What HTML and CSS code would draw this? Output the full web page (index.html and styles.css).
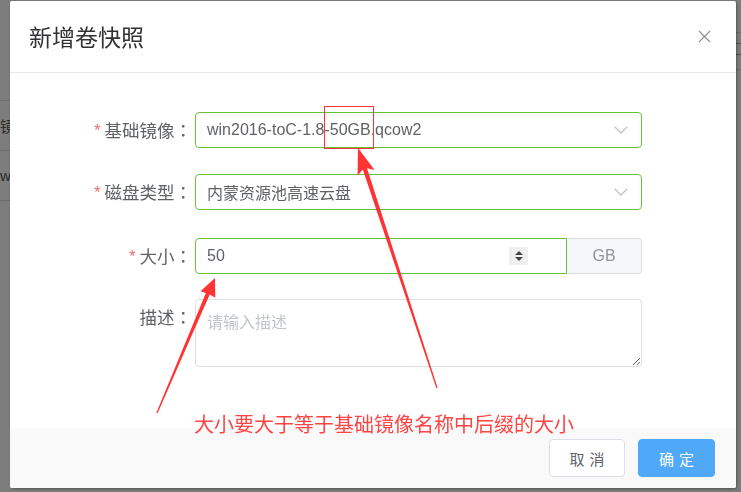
FILE: index.html
```html
<!DOCTYPE html>
<html lang="zh-CN">
<head>
<meta charset="utf-8">
<title>新增卷快照</title>
<link rel="stylesheet" href="styles.css">
</head>
<body>
<div class="page">
  <div class="bg-main">
    <div class="bg-top"></div>
    <div class="bg-row">镜像名称</div>
    <div class="bg-row">win2016-toC-1.8-50GB.qcow2</div>
  </div>
  <div class="bg-side">
    <div class="bg-side-top"></div>
    <div class="bg-side-icon"></div>
    <div class="bg-side-row"></div>
  </div>
</div>

<div class="mask"></div>

<div class="dialog">
  <div class="dlg-header">
    <span class="dlg-title">新增卷快照</span>
    <svg class="dlg-close" width="13" height="13" viewBox="0 0 13 13"><path d="M1 1 L12 12 M12 1 L1 12" stroke="#909399" stroke-width="1.2" fill="none"/></svg>
  </div>
  <div class="dlg-body">
    <div class="form-row gap-a">
      <div class="form-label"><span class="req">*</span>基础镜像<span class="colon">：</span></div>
      <div class="select">
        <span>win2016-toC-1.8-50GB.qcow2</span>
        <svg width="14" height="8" viewBox="0 0 14 8"><path d="M0.7 0.7 L7 7 L13.3 0.7" stroke="#c0c4cc" stroke-width="1.3" fill="none"/></svg>
      </div>
    </div>
    <div class="form-row gap-b">
      <div class="form-label"><span class="req">*</span>磁盘类型<span class="colon">：</span></div>
      <div class="select">
        <span class="cjk">内蒙资源池高速云盘</span>
        <svg width="14" height="8" viewBox="0 0 14 8"><path d="M0.7 0.7 L7 7 L13.3 0.7" stroke="#c0c4cc" stroke-width="1.3" fill="none"/></svg>
      </div>
    </div>
    <div class="form-row gap-c">
      <div class="form-label"><span class="req">*</span>大小<span class="colon">：</span></div>
      <div class="num-group">
        <div class="num-input">
          <span>50</span>
          <span class="spin"><span class="tri-up"></span><span class="tri-down"></span></span>
        </div>
        <div class="append">GB</div>
      </div>
    </div>
    <div class="form-row">
      <div class="form-label">描述<span class="colon">：</span></div>
      <textarea class="desc" placeholder="请输入描述"></textarea>
    </div>
  </div>
  <div class="dlg-footer">
    <button class="btn btn-default">取消</button>
    <button class="btn btn-primary">确定</button>
  </div>
</div>

<div class="annot">
  <div class="annot-box"></div>
  <svg class="annot-svg" width="741" height="492" viewBox="0 0 741 492">
    <polygon fill="#f33" points="358,148 374.6,169.9 367,168.2 437.6,387.8 436.4,388.2 362.8,169.6 357.6,175.5"/>
    <polygon fill="#f33" points="215,278 215.3,297.7 209.7,294.6 157.6,413.2 156.4,412.8 205.9,293 200.5,291.3"/>
  </svg>
  <div class="annot-text">大小要大于等于基础镜像名称中后缀的大小</div>
</div>
</body>
</html>
```

FILE: styles.css
```css
* { box-sizing: border-box; }
html, body { margin: 0; padding: 0; }
body {
  width: 741px;
  height: 492px;
  overflow: hidden;
  background: #fff;
  font-family: "Liberation Sans", "Noto Sans CJK SC", sans-serif;
}

/* background page */
.page { display: flex; height: 492px; }
.bg-main { flex: 1; }
.bg-top { height: 101px; border-bottom: 1px solid #dcdcdc; }
.bg-row {
  height: 50px;
  border-bottom: 1px solid #dcdcdc;
  display: flex;
  align-items: center;
  font-size: 15px;
  color: #555;
}
.bg-side { width: 10px; }
.bg-side-top { height: 33px; border-bottom: 1px solid #dcdcdc; }
.bg-side-icon { height: 12px; margin: 10px 0 0 3px; width: 10px; border: 1px solid #999; }
.bg-side-row { height: 15px; border-bottom: 1px solid #dcdcdc; }

.mask { position: fixed; inset: 0; background: rgba(0, 0, 0, 0.51); }

/* dialog */
.dialog {
  position: fixed;
  left: 10px;
  top: 1px;
  width: 726px;
  height: 487px;
  background: #fff;
  border-radius: 2px;
  box-shadow: 1px 1px 3px rgba(0, 0, 0, 0.35);
  display: flex;
  flex-direction: column;
  overflow: hidden;
}
.dlg-header {
  flex: none;
  height: 72px;
  border-bottom: 1px solid #e8e8e8;
  display: flex;
  align-items: center;
  justify-content: space-between;
  padding: 0 25px 0 19px;
}
.dlg-title {
  font-family: "Noto Sans CJK SC", sans-serif;
  font-size: 23px;
  color: #303133;
  line-height: 1;
}
.dlg-body { flex: 1; padding-top: 39px; }

.form-row {
  display: grid;
  grid-template-columns: 185px 447px;
  align-items: start;
}
.gap-a { margin-bottom: 26px; }
.gap-b { margin-bottom: 28px; }
.gap-c { margin-bottom: 25px; }

.form-label {
  height: 36px;
  display: flex;
  align-items: center;
  justify-content: flex-end;
  font-family: "Noto Sans CJK SC", sans-serif;
  font-size: 17.5px;
  line-height: 1;
  color: #606266;
  padding-right: 3px;
}
.colon { font-family: "Noto Sans CJK JP", sans-serif; }
.req {
  font-family: "Liberation Sans", sans-serif;
  color: #f56c6c;
  font-size: 17px;
  margin-right: 4px;
}

.select {
  height: 36px;
  border: 1px solid #67c23a;
  border-radius: 4px;
  display: flex;
  align-items: center;
  justify-content: space-between;
  padding: 0 13px 0 11px;
  font-size: 16px;
  color: #606266;
}
.cjk { font-family: "Noto Sans CJK SC", sans-serif; }

.num-group { display: flex; height: 36px; }
.num-input {
  width: 372px;
  border: 1px solid #67c23a;
  border-radius: 4px 0 0 4px;
  display: flex;
  align-items: center;
  justify-content: space-between;
  padding: 0 38px 0 11px;
  font-size: 16px;
  color: #606266;
}
.spin {
  width: 19px;
  height: 18px;
  background: #efefef;
  display: flex;
  flex-direction: column;
  align-items: center;
  justify-content: center;
  gap: 2px;
}
.tri-up {
  width: 0; height: 0;
  border-left: 4.5px solid transparent;
  border-right: 4.5px solid transparent;
  border-bottom: 4.5px solid #444;
}
.tri-down {
  width: 0; height: 0;
  border-left: 4.5px solid transparent;
  border-right: 4.5px solid transparent;
  border-top: 4.5px solid #444;
}
.append {
  flex: 1;
  background: #f5f7fa;
  border: 1px solid #dcdfe6;
  border-left: none;
  border-radius: 0 4px 4px 0;
  color: #909399;
  font-size: 16px;
  display: flex;
  align-items: center;
  justify-content: center;
}

.desc {
  display: block;
  width: 447px;
  height: 68px;
  border: 1px solid #dcdfe6;
  border-radius: 4px;
  padding: 9px 11px;
  font-family: "Noto Sans CJK SC", sans-serif;
  font-size: 16px;
  line-height: 24px;
  color: #606266;
  resize: vertical;
  outline: none;
}
.desc::placeholder { color: #c0c4cc; }

.dlg-footer {
  flex: none;
  height: 60px;
  background: #f9f9f9;
  display: flex;
  justify-content: flex-end;
  align-items: flex-start;
  gap: 13px;
  padding: 11px 21px 0 0;
}
.btn {
  height: 38px;
  border-radius: 4px;
  font-family: "Noto Sans CJK SC", sans-serif;
  font-size: 15px;
  letter-spacing: 5px;
  text-indent: 5px;
  padding: 0;
  cursor: pointer;
}
.btn-default {
  width: 76px;
  background: #fff;
  border: 1px solid #dcdfe6;
  color: #606266;
}
.btn-primary {
  width: 77px;
  background: #50a8f8;
  border: 1px solid #50a8f8;
  color: #fff;
}

/* annotations */
.annot { position: fixed; inset: 0; pointer-events: none; }
.annot-svg { position: absolute; left: 0; top: 0; }
.annot-box {
  position: absolute;
  left: 324px;
  top: 106px;
  width: 50px;
  height: 43px;
  border: 1px solid #f33;
}
.annot-text {
  position: absolute;
  left: 194px;
  top: 410px;
  font-family: "Noto Sans CJK SC", sans-serif;
  font-size: 20px;
  line-height: 28px;
  color: #f44;
  white-space: nowrap;
}
```
